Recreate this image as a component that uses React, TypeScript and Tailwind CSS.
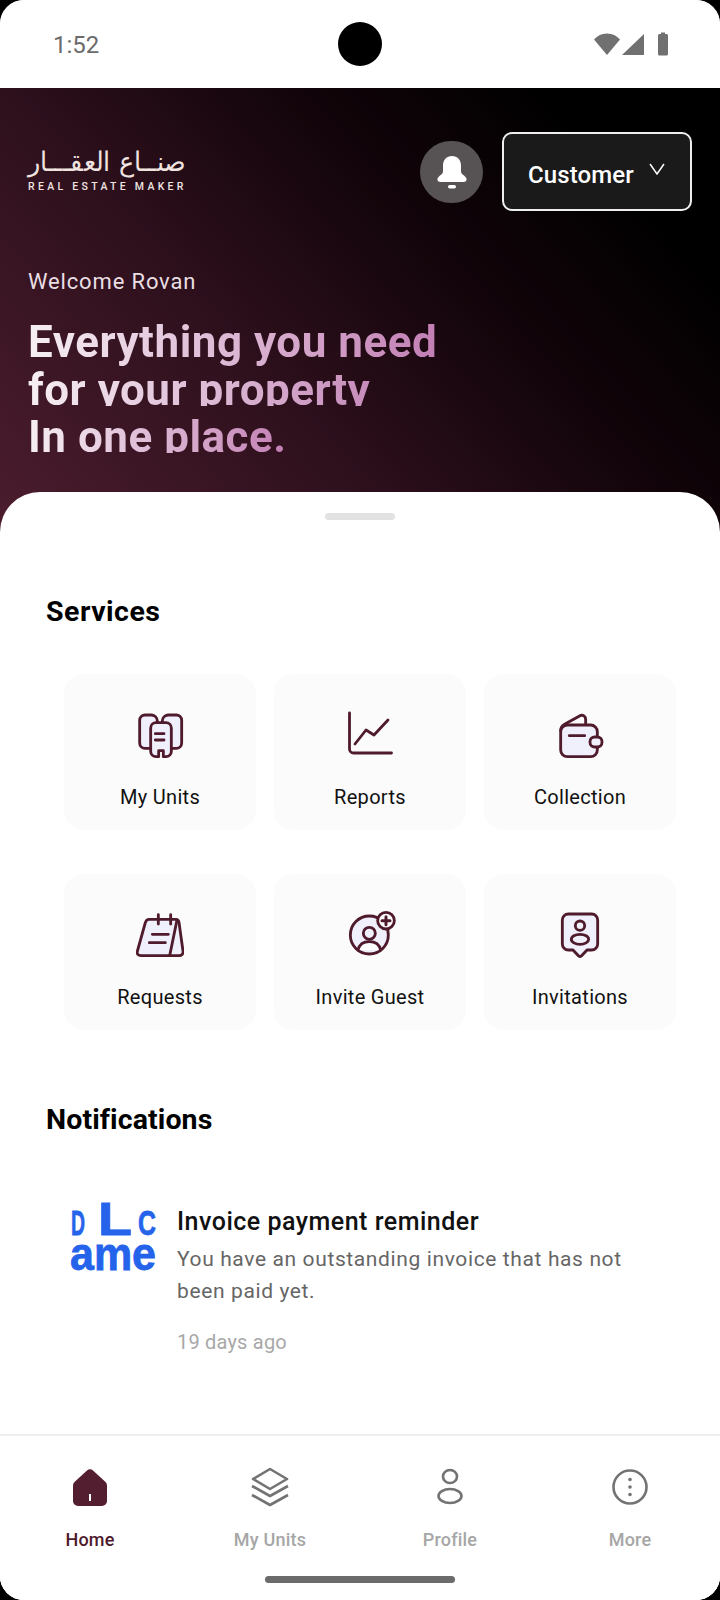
const din = "font-['Roboto',sans-serif]";

function StatusBar() {
  return (
    <div className="flex h-[88px] items-center justify-between bg-white pl-[53px] pr-[39px] relative">
      <span className="mt-[1px] font-['Roboto',sans-serif] text-[24px] leading-none text-[#6b6b6b]">1:52</span>
      <div className="absolute left-[338px] top-[22px] h-[44px] w-[44px] rounded-full bg-black" />
      <svg width="88" height="24" viewBox="0 0 88 24" fill="#707070">
        <path d="M1 7.500C4.500 3.500 8.500 1.500 14 1.500S23.500 3.500 27 7.500L14 23Z" />
        <path d="M51 2V23H29Z" />
        <path d="M65 3.500a1.500 1.500 0 0 1 1.500-1.500H68V0.500h4V2h1.500A1.500 1.500 0 0 1 75 3.500V22a1.500 1.500 0 0 1-1.500 1.500h-7A1.500 1.500 0 0 1 65 22Z" />
      </svg>
    </div>
  );
}

function Logo() {
  return (
    <div className="flex w-[158px] flex-col pb-[4px]">
      <svg width="158" height="30" viewBox="0 0 158 30" className="block overflow-visible">
        <text
          x="0"
          y="24"
          textLength="158"
          lengthAdjust="spacingAndGlyphs"
          fontFamily="DejaVu Sans, sans-serif"
          fontSize="27"
          fontWeight="200"
          fill="#f0e4e0"
        >
          صنــاع العقـــار
        </text>
      </svg>
      <span className="mt-[4px] whitespace-nowrap font-['Roboto',sans-serif] text-[10.5px] font-medium leading-[12px] tracking-[3.3px] text-[#f0e4e0]">
        REAL ESTATE MAKER
      </span>
    </div>
  );
}

function Hero() {
  return (
    <div className="h-[452px] bg-[linear-gradient(48deg,#4c1d2e_0%,#2e101d_36%,#12040a_62%,#000000_85%)]">
      <div className="flex items-center justify-between pl-[28px] pr-[28px] pt-[44px]">
        <Logo />
        <div className="flex items-center gap-[19px]">
          <div className="flex h-[62px] w-[63px] items-center justify-center rounded-full bg-[#575355]">
            <svg width="32" height="34" viewBox="0 0 32 34" fill="#ffffff">
              <path d="M16 1c5.500 0 9 4 9 9.500v6c0 1.500 1 2.500 3 4 2 1.600 2.600 3 2.600 4 0 1.600-1.300 2.500-3 2.500H4.400c-1.700 0-3-.9-3-2.500 0-1 .6-2.400 2.600-4 2-1.500 3-2.500 3-4v-6C7 5 10.500 1 16 1Z" />
              <rect x="12" y="30" width="8" height="3.500" rx="1.700" />
            </svg>
          </div>
          <div className="flex h-[79px] w-[190px] items-center rounded-[10px] border-2 border-[#eeeeee] bg-[#1a1a1a] pl-[24px]">
            <span className={`${din} mt-[7px] text-[24px] font-medium leading-none tracking-[0.1px] text-white`}>Customer</span>
            <svg width="16" height="12" viewBox="0 0 16 12" className="ml-[15px] mt-[-6px]" fill="none" stroke="#ffffff" strokeWidth="1.500">
              <path d="M1 1l7 10 7-10" />
            </svg>
          </div>
        </div>
      </div>
      <p className={`${din} mt-[57px] pl-[28px] text-[22px] leading-[28px] tracking-[0.85px] text-[#e9dfe3]`}>Welcome Rovan</p>
      <div className={`${din} mt-[25px] pl-[28px] text-[44px] font-bold tracking-[0.5px]`}>
        <div className="h-[48px] w-fit bg-[linear-gradient(90deg,#f6eff3_0%,#c27fb4_100%)] bg-clip-text leading-[42px] text-transparent">Everything you need</div>
        <div className="h-[37px] w-fit bg-[linear-gradient(90deg,#f6eff3_0%,#c78cbb_100%)] bg-clip-text leading-[42px] text-transparent">for your property</div>
        <div className="mt-[10px] h-[37px] w-fit bg-[linear-gradient(90deg,#f6eff3_0%,#c27fb4_100%)] bg-clip-text leading-[42px] text-transparent">In one place.</div>
      </div>
    </div>
  );
}

const S = "#4e1a2c";
const F = "#eff0fb";

function UnitsIcon() {
  return (
    <svg width="48" height="48" viewBox="48 33 144 144" fill={F} stroke={S} strokeWidth="8.500" strokeLinejoin="round" strokeLinecap="round" className="block">
      <path d="M75 45h20a18 18 0 0 1 17 18v82H75a16 16 0 0 1-16-16V61a16 16 0 0 1 16-16Z" />
      <path d="M169 45h-25a18 18 0 0 0-17 18v82h42a16 16 0 0 0 16-16V61a16 16 0 0 0-16-16Z" />
      <path d="M108 68h30a16 16 0 0 1 16 16v70a16 16 0 0 1-16 16h-8v-18h-14v18h-8a16 16 0 0 1-16-16V84a16 16 0 0 1 16-16Z" />
      <path d="M106 101h26M106 120h26" fill="none" />
    </svg>
  );
}

function ReportsIcon() {
  return (
    <svg width="48" height="48" viewBox="0 0 48 48" fill="none" stroke={S} strokeWidth="2.800" strokeLinejoin="round" strokeLinecap="round" className="block">
      <path d="M3.500 2v36a4 4 0 0 0 4 4H45.500" />
      <path d="M9 33l11-14 8 5 14-15" />
    </svg>
  );
}

function WalletIcon() {
  return (
    <svg width="48" height="48" viewBox="48 33 144 144" fill={F} stroke={S} strokeWidth="8.500" strokeLinejoin="round" strokeLinecap="round" className="block">
      <path d="M62 92c0-10 5-16 13-20l45-25c9-4 17 2 17 12v16" fill="none" />
      <path d="M82 75h70a20 20 0 0 1 20 20v55a20 20 0 0 1-20 20H82a20 20 0 0 1-20-20V95a20 20 0 0 1 20-20Z" />
      <rect x="150" y="111" width="36" height="30" rx="14" />
      <path d="M88 107h46" fill="none" />
    </svg>
  );
}

function RequestsIcon() {
  return (
    <svg width="48" height="48" viewBox="45 33 144 144" fill={F} stroke={S} strokeWidth="8.500" strokeLinejoin="round" strokeLinecap="round" className="block">
      <path d="M84 58h80c6 0 9 4 10 9l12 86c1 8-3 14-12 14H60c-9 0-13-6-11-13l24-86c2-6 5-10 11-10Z" />
      <path d="M168 60l-22 107" fill="none" />
      <path d="M112 44v28M149 44v28M94 103h48M85 128h48" fill="none" />
    </svg>
  );
}

function InviteIcon() {
  return (
    <svg width="48" height="48" viewBox="30 33 144 144" fill={F} stroke={S} strokeWidth="8.500" strokeLinejoin="round" strokeLinecap="round" className="block overflow-visible">
      <circle cx="100" cy="105" r="57" />
      <circle cx="100" cy="100" r="18" fill="none" />
      <path d="M66 150c4-17 18-25 34-25s30 8 34 25" fill="#ffffff" />
      <circle cx="150" cy="62" r="25" fill="#ffffff" />
      <path d="M150 50v24M138 62h24" fill="none" strokeWidth="9" />
    </svg>
  );
}

function InvitationsIcon() {
  return (
    <svg width="48" height="48" viewBox="31 33 144 144" fill={F} stroke={S} strokeWidth="8.500" strokeLinejoin="round" strokeLinecap="round" className="block">
      <path d="M68 42h70a18 18 0 0 1 18 18v72a18 18 0 0 1-18 18h-14l-17 18a6 6 0 0 1-8 0l-17-18H68a18 18 0 0 1-18-18V60a18 18 0 0 1 18-18Z" />
      <circle cx="103" cy="77" r="14" fill="none" />
      <ellipse cx="103" cy="118" rx="26" ry="15" fill="none" />
    </svg>
  );
}

const services = [
  { label: 'My Units', icon: <UnitsIcon /> },
  { label: 'Reports', icon: <ReportsIcon /> },
  { label: 'Collection', icon: <WalletIcon /> },
  { label: 'Requests', icon: <RequestsIcon /> },
  { label: 'Invite Guest', icon: <InviteIcon /> },
  { label: 'Invitations', icon: <InvitationsIcon /> },
];

function Services() {
  return (
    <div className="grid grid-cols-3 gap-x-[18px] gap-y-[44px] pl-[64px] pr-[44px]">
      {services.map((s) => (
        <div key={s.label} className="flex h-[156px] flex-col items-center rounded-[20px] bg-[#fbfbfb] pt-[37px]">
          {s.icon}
          <span className={`${din} mt-[26px] text-[20px] leading-[24px] tracking-[0.3px] text-[#111111]`}>{s.label}</span>
        </div>
      ))}
    </div>
  );
}

function DlcLogo() {
  return (
    <svg width="90" height="72" viewBox="0 0 90 72" fill="#2563eb" stroke="#2563eb" strokeWidth="0.800" className="block shrink-0 overflow-visible" fontFamily="Liberation Sans, sans-serif" fontWeight="700">
      <text x="1" y="35" fontSize="35" textLength="14" lengthAdjust="spacingAndGlyphs">D</text>
      <text x="28" y="35" fontSize="46" textLength="34" lengthAdjust="spacingAndGlyphs">L</text>
      <text x="68" y="35" fontSize="35" textLength="18" lengthAdjust="spacingAndGlyphs">C</text>
      <text x="0" y="70" fontSize="47" textLength="86" lengthAdjust="spacingAndGlyphs">ame</text>
    </svg>
  );
}

function Notification() {
  return (
    <div className="mt-[64px] flex pl-[70px] pr-[40px]">
      <DlcLogo />
      <div className="ml-[17px] pt-[7px]">
        <p className={`${din} text-[25px] font-medium leading-[30px] tracking-[0.5px] text-[#111111]`}>Invoice payment reminder</p>
        <p className={`${din} mt-[6px] text-[21px] leading-[32px] tracking-[0.62px] text-[#666666]`}>
          You have an outstanding invoice that has not
          <br />
          been paid yet.
        </p>
        <p className={`${din} mt-[22px] text-[20px] leading-[26px] tracking-[0.2px] text-[#a8a8a8]`}>19 days ago</p>
      </div>
    </div>
  );
}

const navStroke = '#737373';

function BottomNav() {
  return (
    <div className="mt-auto border-t-2 border-[#eeeeee] bg-white">
      <div className="grid grid-cols-4 pt-[31px]">
        <NavItem label="Home" active>
          <svg width="40" height="40" viewBox="0 0 40 40" className="block">
            <path d="M17 3.500a4 4 0 0 1 6 0l12 11a5 5 0 0 1 2 4V34a5 5 0 0 1-5 5H8a5 5 0 0 1-5-5V18.500a5 5 0 0 1 2-4Z" fill="#531f30" />
            <rect x="19" y="27" width="2" height="7" fill="#ffffff" />
          </svg>
        </NavItem>
        <NavItem label="My Units">
          <svg width="40" height="40" viewBox="0 0 40 40" fill="none" stroke={navStroke} strokeWidth="2.600" strokeLinejoin="round" className="block">
            <path d="M20 2l17 10-17 10L3 12Z" />
            <path d="M2 19l18 10 18-10M2 28l18 10 18-10" />
          </svg>
        </NavItem>
        <NavItem label="Profile">
          <svg width="40" height="40" viewBox="0 0 40 40" fill="none" stroke={navStroke} strokeWidth="2.600" className="block">
            <ellipse cx="20" cy="9.500" rx="7" ry="6.500" />
            <ellipse cx="20" cy="29" rx="11.500" ry="7" />
          </svg>
        </NavItem>
        <NavItem label="More">
          <svg width="40" height="40" viewBox="0 0 40 40" fill="none" stroke={navStroke} strokeWidth="2.600" className="block">
            <circle cx="20" cy="20" r="16.500" />
            <g fill={navStroke} stroke="none">
              <circle cx="20" cy="12.500" r="1.800" />
              <circle cx="20" cy="20" r="1.800" />
              <circle cx="20" cy="27.500" r="1.800" />
            </g>
          </svg>
        </NavItem>
      </div>
      <div className="flex justify-center pb-[17px] pt-[25px]">
        <div className="h-[7px] w-[190px] rounded-full bg-[#6b6b6b]" />
      </div>
    </div>
  );
}

function NavItem({ label, active, children }: { label: string; active?: boolean; children: React.ReactNode }) {
  return (
    <div className="flex flex-col items-center">
      {children}
      <span className={`${din} mt-[22px] text-[18px] font-medium leading-[22px] tracking-[0.2px] ${active ? 'text-[#4e1a2c]' : 'text-[#a6a6a6]'}`}>{label}</span>
    </div>
  );
}

export default function App() {
  return (
    <div className="h-[1600px] w-[720px] bg-black">
      <div className="flex h-full flex-col overflow-hidden rounded-[24px] bg-white">
        <StatusBar />
        <Hero />
        <div className="relative mt-[-48px] flex flex-1 flex-col rounded-t-[40px] bg-white">
          <div className="mx-auto mt-[21px] h-[7px] w-[70px] rounded-full bg-[#e2e2e2]" />
          <h2 className={`${din} mb-[46px] mt-[76px] pl-[46px] text-[28.5px] font-bold leading-[32px] tracking-[0.5px] text-black`}>Services</h2>
          <Services />
          <h2 className={`${din} mt-[74px] pl-[46px] text-[28.5px] font-bold leading-[32px] tracking-[0.1px] text-black`}>Notifications</h2>
          <Notification />
          <BottomNav />
        </div>
      </div>
    </div>
  );
}
